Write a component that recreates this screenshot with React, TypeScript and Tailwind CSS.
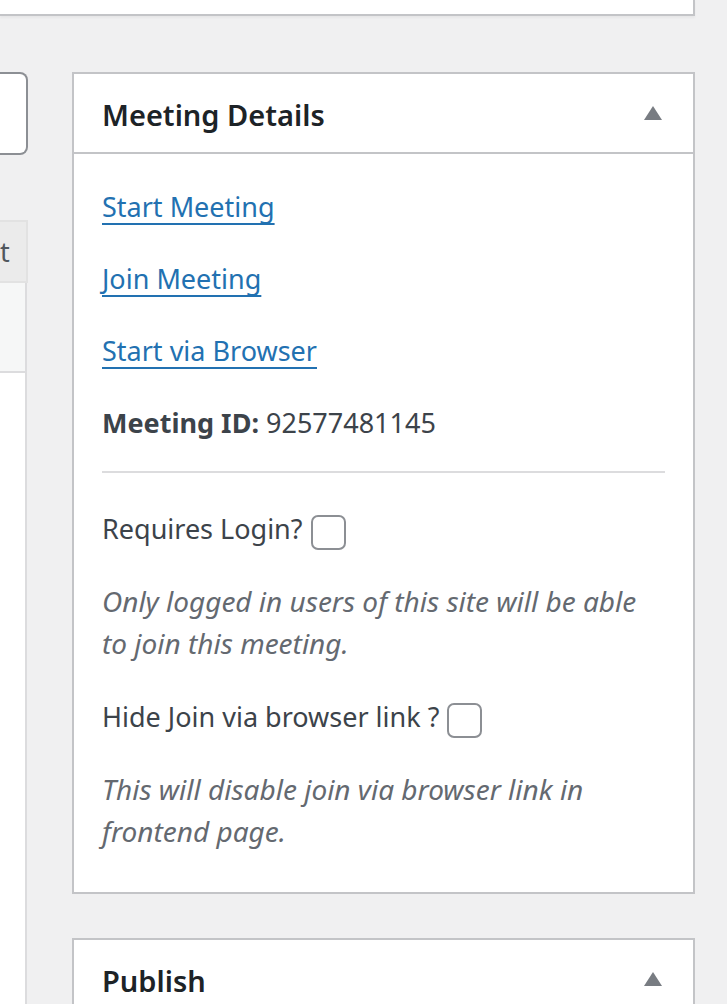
import type { ReactNode } from "react";

function Toggle() {
  return (
    <svg width="18" height="14" viewBox="0 0 18 14" className="block">
      <path d="M9 0 L18 14 L0 14 Z" fill="#787c82" />
    </svg>
  );
}

function Box() {
  return (
    <span className="ml-[8px] mt-[6px] inline-block h-[35px] w-[35px] shrink-0 rounded-[7px] border-2 border-[#8c8f94] bg-white" />
  );
}

function Postbox({ title, children }: { title: string; children?: ReactNode }) {
  return (
    <div className="w-[623px] border-2 border-[#c3c4c7] bg-white">
      <div className="flex h-[80px] items-center justify-between border-b-2 border-[#c3c4c7] pl-[28px] pr-[31px]">
        <h2 className="m-0 pt-[4px] text-[29px] font-semibold text-[#1d2327]">{title}</h2>
        <Toggle />
      </div>
      {children}
    </div>
  );
}

export default function App() {
  return (
    <div
      className="min-h-screen overflow-hidden bg-[#f0f0f1] text-[27px] text-[#3c434a]"
      style={{ fontFamily: '"Noto Sans", "Open Sans", Arial, sans-serif' }}
    >
      <div className="h-[16px] w-[695px] border-b-2 border-r-2 border-[#c3c4c7] bg-white shadow-[0_2px_2px_rgba(0,0,0,0.04)]" />

      <div className="mt-[56px] flex items-start">
        {/* left column, cut off at the screen edge */}
        <div className="flex w-[28px] flex-col">
          <div className="h-[83px] w-[28px] rounded-r-[8px] border-2 border-l-0 border-[#8c8f94] bg-white" />
          <div className="mt-[65px] flex h-[63px] items-center border-2 border-l-0 border-[#e2e2e2] bg-[#ebebeb] leading-none text-[#50575e]">
            t
          </div>
          <div className="h-[90px] w-[27px] border-b-2 border-r-2 border-[#dcdcde] bg-[#f6f7f7]" />
          <div className="h-[700px] w-[27px] border-r-2 border-[#dcdcde] bg-white" />
        </div>

        <div className="ml-[44px] flex flex-col gap-[44px]">
          <Postbox title="Meeting Details">
            <div className="px-[28px] pb-[40px] pt-[35px]">
              <div className="flex flex-col gap-[36px] leading-[36px]">
                <a href="#" className="w-fit text-[#2271b1] underline underline-offset-[6px]">
                  Start Meeting
                </a>
                <a href="#" className="w-fit text-[#2271b1] underline underline-offset-[6px]">
                  Join Meeting
                </a>
                <a href="#" className="w-fit text-[#2271b1] underline underline-offset-[6px]">
                  Start via Browser
                </a>
                <p className="m-0">
                  <strong className="font-bold">Meeting ID:</strong> 92577481145
                </p>
              </div>

              <hr className="mt-[30px] border-0 border-t-2 border-[#dcdcde]" />

              <div className="mt-[38px] flex h-[36px] items-center">
                <span>Requires Login?</span>
                <Box />
              </div>
              <p className="m-0 mt-[33px] max-w-[555px] text-[28px] italic leading-[42px] text-[#646970]">
                Only logged in users of this site will be able to join this meeting.
              </p>

              <div className="mt-[35px] flex h-[36px] items-center">
                <span>Hide Join via browser link ?</span>
                <Box />
              </div>
              <p className="m-0 mt-[33px] max-w-[555px] text-[28px] italic leading-[42px] text-[#646970]">
                This will disable join via browser link in frontend page.
              </p>
            </div>
          </Postbox>

          <Postbox title="Publish" />
        </div>
      </div>
    </div>
  );
}
